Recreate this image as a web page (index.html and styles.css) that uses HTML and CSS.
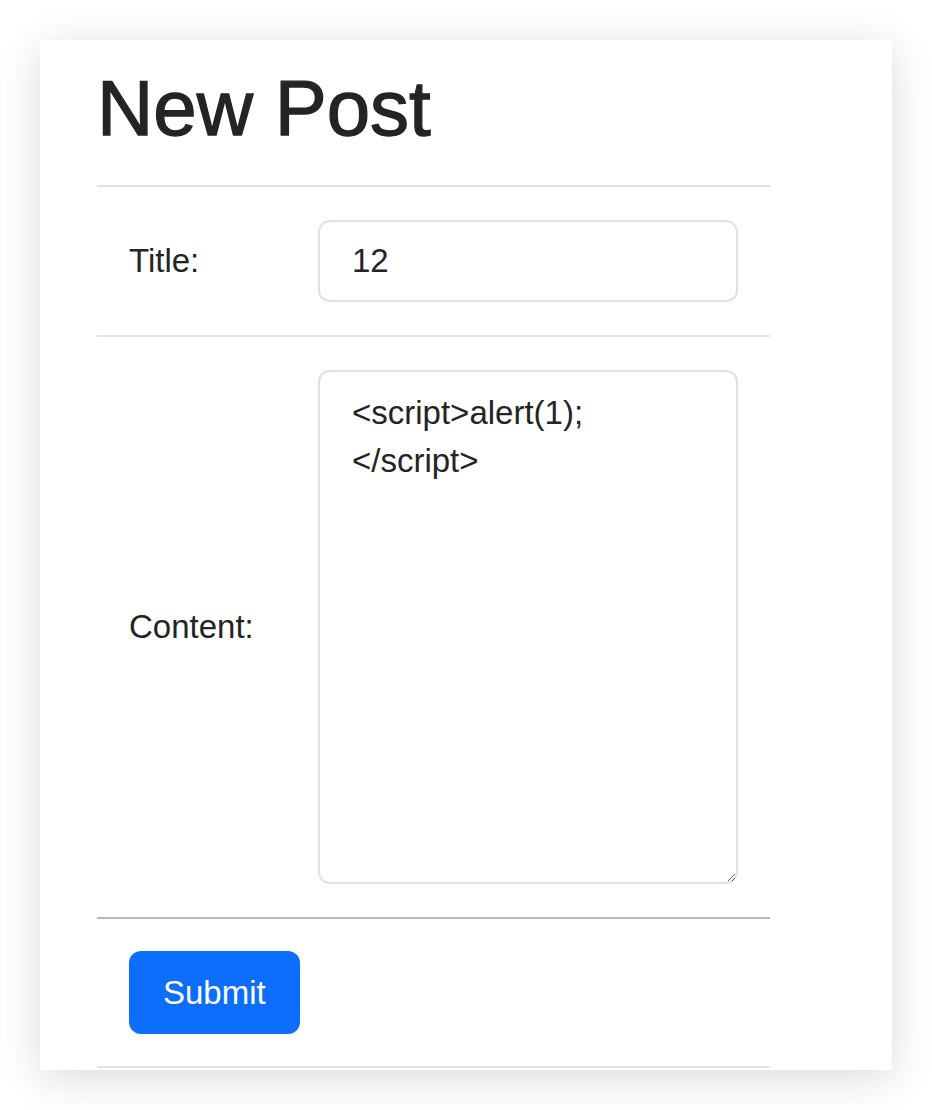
FILE: index.html
```html
<!DOCTYPE html>
<html lang="en">
<head>
<meta charset="utf-8">
<title>New Post</title>
<link rel="stylesheet" href="styles.css">
</head>
<body>
<main class="card">
  <h1 class="page-title">New Post</h1>
  <form class="post-form">
    <table class="form-table">
      <tbody>
        <tr>
          <td class="label-cell"><label for="title">Title:</label></td>
          <td class="field-cell"><input id="title" class="field" type="text" value="12"></td>
        </tr>
        <tr>
          <td class="label-cell"><label for="content">Content:</label></td>
          <td class="field-cell"><textarea id="content" class="field field-area">&lt;script&gt;alert(1);&lt;/script&gt;</textarea></td>
        </tr>
      </tbody>
      <tfoot>
        <tr>
          <td class="action-cell" colspan="2"><button type="button" class="btn-submit">Submit</button></td>
        </tr>
      </tfoot>
    </table>
  </form>
</main>
</body>
</html>
```

FILE: styles.css
```css
html, body {
  margin: 0;
  padding: 0;
  background: #ffffff;
}

body {
  font-family: "Liberation Sans", Arial, sans-serif;
  color: #242424;
  height: 1110px;
  overflow: hidden;
}

.card {
  box-sizing: border-box;
  width: 852px;
  height: 1030px;
  margin: 40px;
  padding: 20px 0 0 57px;
  background: #ffffff;
  box-shadow: 0 8px 40px rgba(0, 0, 0, 0.15);
}

.page-title {
  margin: 0 0 29px;
  font-size: 78px;
  line-height: 96px;
  font-weight: 400;
  color: #242424;
  -webkit-text-stroke: 1.3px #242424;
}

.post-form {
  margin: 0;
}

.form-table {
  width: 673px;
  border-collapse: separate;
  border-spacing: 0;
}

.form-table td {
  border-top: 2px solid #dee2e6;
  padding: 33px 32px;
  font-size: 33px;
  line-height: 48px;
}

.label-cell {
  width: 126px;
  vertical-align: middle;
}

.field {
  display: block;
  box-sizing: border-box;
  width: 420px;
  height: 82px;
  padding: 15px 32px;
  border: 2px solid #dee2e6;
  border-radius: 12px;
  background: #ffffff;
  font-family: "Liberation Sans", Arial, sans-serif;
  font-size: 33px;
  line-height: 48px;
  color: #242424;
  outline: none;
}

.field-area {
  height: 514px;
  padding: 17px 32px;
  line-height: 48px;
  resize: both;
}

.form-table tfoot td {
  padding: 32px;
  border-top: 2px solid #b8b8b8;
  border-bottom: 2px solid #dee2e6;
}

.btn-submit {
  display: block;
  box-sizing: border-box;
  height: 83px;
  padding: 0 34px;
  border: 0;
  border-radius: 12px;
  background: #0d6efd;
  color: #ffffff;
  font-family: "Liberation Sans", Arial, sans-serif;
  font-size: 33px;
  line-height: 83px;
}
```
